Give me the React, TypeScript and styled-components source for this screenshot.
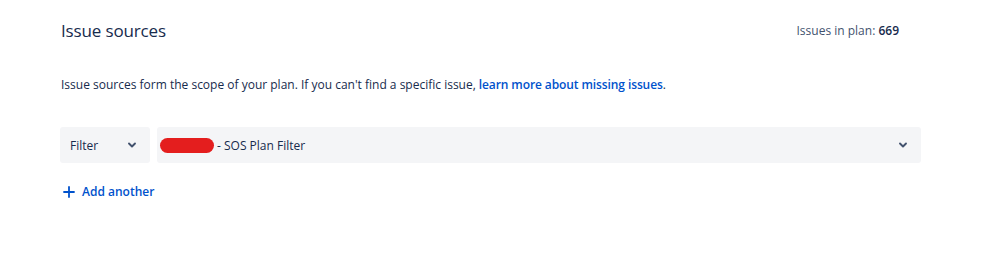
import styled, { createGlobalStyle } from 'styled-components';

const GlobalStyle = createGlobalStyle`
  body {
    margin: 0;
    background: #ffffff;
    font-family: "Open Sans", "Noto Sans", sans-serif;
    color: #172b4d;
  }
`

const ChevronDown = () => (
  <svg width="10" height="10" viewBox="0 0 10 10">
    <path d="M2 3.5 L5 6.5 L8 3.5" fill="none" stroke="#42526e" strokeWidth="1.9" strokeLinecap="round" strokeLinejoin="round" />
  </svg>
);

const PlusIcon = () => (
  <svg width="12" height="12" viewBox="0 0 12 12">
    <path d="M6 1 V11 M1 6 H11" stroke="#0052cc" strokeWidth="1.8" strokeLinecap="round" />
  </svg>
);

export default function App() {
  return (
    <>
      <GlobalStyle />
      <Page>
        <Header>
          <Title>Issue sources</Title>
          <Count>Issues in plan: <b>669</b></Count>
        </Header>
        <Description>
          Issue sources form the scope of your plan. If you can't find a specific issue,
          <Link href="#">learn more about missing issues</Link>.
        </Description>
        <Row>
          <Select width="90px">
            <SelectText>Filter</SelectText>
            <ChevronDown />
          </Select>
          <Select>
            <SelectText>
              <Redacted />
              - SOS Plan Filter
            </SelectText>
            <ChevronDown />
          </Select>
        </Row>
        <AddButton>
          <PlusIcon />
          Add another
        </AddButton>
      </Page>
    </>
  );
}

const Page = styled.div`
  box-sizing: border-box;
  width: 861px;
  margin-left: 60px;
  padding-top: 19px;
  display: flex;
  flex-direction: column;
`
const Header = styled.div`
  display: flex;
  align-items: center;
  justify-content: space-between;
  padding-right: 22px;
  padding-left: 1px;
`
const Title = styled.div`
  font-size: 17px;
  font-weight: 500;
  color: #172b4d;
  letter-spacing: -0.15px;
`
const Count = styled.div`
  font-size: 12px;
  color: #42526e;
  b {
    font-weight: 600;
    color: #172b4d;
  }
`
const Description = styled.div`
  margin-top: 34px;
  padding-left: 1px;
  font-size: 12px;
  color: #172b4d;
`
const Link = styled.a`
  color: #0052cc;
  font-weight: 600;
  text-decoration: none;
  margin-left: 3px;
  letter-spacing: -0.1px;
`
const Row = styled.div`
  margin-top: 34px;
  display: flex;
  gap: 7px;
`
const Select = styled.div<{ width?: string }>`
  box-sizing: border-box;
  height: 36px;
  width: ${p => p.width || 'auto'};
  flex: ${p => (p.width ? 'none' : '1')};
  background: #f4f5f7;
  border-radius: 3px;
  display: flex;
  align-items: center;
  justify-content: space-between;
  padding: 0 13px 0 10px;
  font-size: 12px;
  color: #172b4d;
`
const SelectText = styled.div`
  display: flex;
  align-items: center;
`
const Redacted = styled.span`
  display: inline-block;
  width: 54px;
  height: 15px;
  border-radius: 8px;
  background: #e41e1e;
  margin-left: -7px;
  margin-right: 3px;
`
const AddButton = styled.div`
  margin-top: 20px;
  padding-left: 3px;
  display: flex;
  align-items: center;
  gap: 7px;
  font-size: 12px;
  font-weight: 600;
  color: #0052cc;
`
